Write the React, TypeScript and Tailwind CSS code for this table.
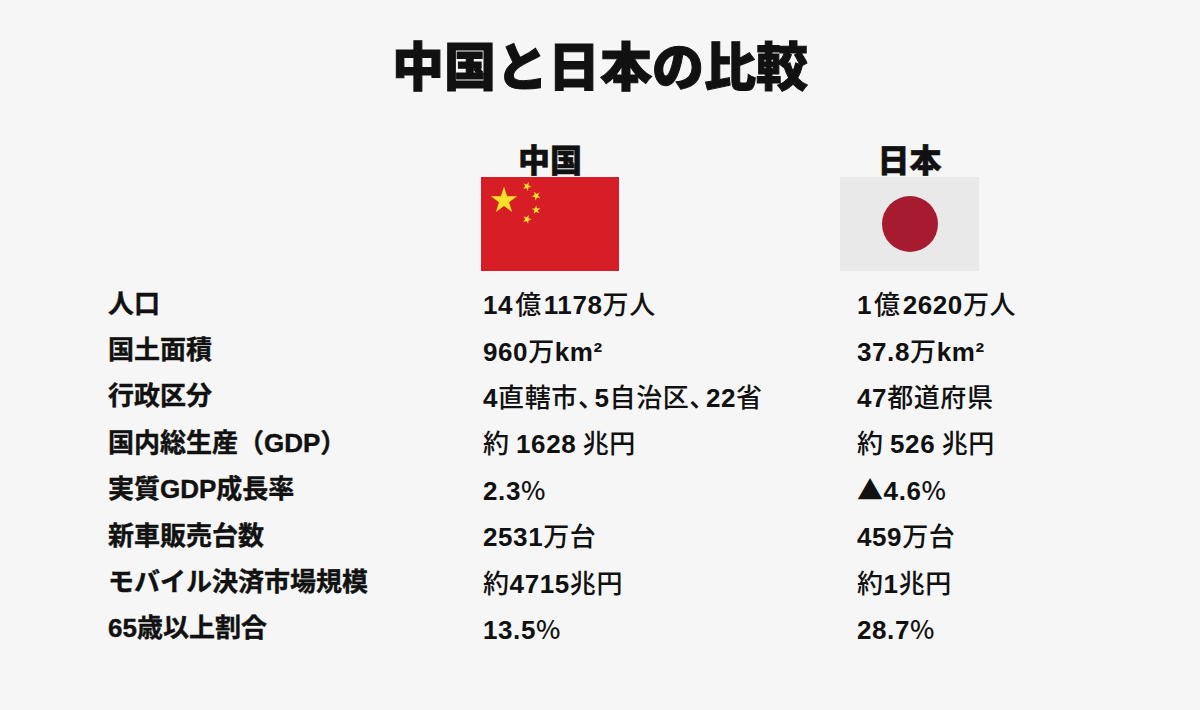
import React from 'react';

// Comparison table: China vs Japan

const rows: { label: string; cn: string; jp: string }[] = [
  { label: '人口', cn: '14億1178万人', jp: '1億2620万人' },
  { label: '国土面積', cn: '960万km²', jp: '37.8万km²' },
  { label: '行政区分', cn: '4直轄市、5自治区、22省', jp: '47都道府県' },
  { label: '国内総生産（GDP）', cn: '約 1628 兆円', jp: '約 526 兆円' },
  { label: '実質GDP成長率', cn: '2.3%', jp: '▲4.6%' },
  { label: '新車販売台数', cn: '2531万台', jp: '459万台' },
  { label: 'モバイル決済市場規模', cn: '約4715兆円', jp: '約1兆円' },
  { label: '65歳以上割合', cn: '13.5%', jp: '28.7%' },
];

// Numbers/latin are set heavier than the Japanese characters in values
function Value({ text }: { text: string }) {
  const parts = text.split(/([0-9A-Za-z.²]+|、|億)/).filter((p) => p !== '');
  return (
    <span className="tracking-[0.6px]">
      {parts.map((p, i) => {
        if (/^[0-9A-Za-z.²]+$/.test(p)) {
          return (
            <span key={i} className="font-['Liberation_Sans',sans-serif] font-bold">
              {p}
            </span>
          );
        }
        if (p === '、') {
          // half-width punctuation, as in the proportional setting
          return (
            <span key={i} className="mr-[3px] [font-feature-settings:'halt'] font-['Noto_Sans_CJK_JP',sans-serif] font-medium">
              {p}
            </span>
          );
        }
        if (p === '億') {
          return (
            <span key={i} className="mx-[2px] font-['Noto_Sans_CJK_JP',sans-serif] font-medium">
              {p}
            </span>
          );
        }
        return (
          <span key={i} className="font-['Noto_Sans_CJK_JP',sans-serif] font-medium whitespace-pre">
            {p}
          </span>
        );
      })}
    </span>
  );
}

function starPoints(cx: number, cy: number, r: number, rot: number) {
  const pts: string[] = [];
  for (let i = 0; i < 10; i++) {
    const rad = i % 2 === 0 ? r : r * 0.382;
    const a = rot + (i * Math.PI) / 5;
    pts.push(`${(cx + rad * Math.sin(a)).toFixed(3)},${(cy - rad * Math.cos(a)).toFixed(3)}`);
  }
  return pts.join(' ');
}

function ChinaFlag() {
  const small = [
    [10, 2],
    [12, 4],
    [12, 7],
    [10, 9],
  ];
  return (
    <svg viewBox="0 0 30 20" preserveAspectRatio="none" className="w-[138px] h-[94px] block">
      <rect width="30" height="20" fill="#d71e27" />
      <polygon points={starPoints(5, 5, 3, 0)} fill="#f5e12a" />
      {small.map(([x, y], i) => {
        const rot = Math.atan2(5 - x, -(5 - y));
        return <polygon key={i} points={starPoints(x, y, 1, rot)} fill="#f5e12a" />;
      })}
    </svg>
  );
}

function JapanFlag() {
  return (
    <div className="w-[139px] h-[94px] bg-[#e9e9e9] flex items-center justify-center">
      <div className="w-[56px] h-[56px] rounded-full bg-[#a61c2e]" />
    </div>
  );
}

export default function App() {
  return (
    <div className="w-[1200px] h-[710px] bg-[#f6f6f6] text-[#111] overflow-hidden font-['Liberation_Sans','Noto_Sans_CJK_JP',sans-serif]">
      <h1 className="pt-[38px] h-[90px] text-center text-[52px] leading-none font-black font-['Noto_Sans_CJK_JP',sans-serif] [-webkit-text-stroke:1px_#111]">
        中国と日本の比較
      </h1>

      {/* country headers with flags */}
      <div className="mt-[52px] flex pl-[481px]">
        <div className="w-[138px] flex flex-col items-center">
          <div className="text-[32px] leading-none font-black font-['Noto_Sans_CJK_JP',sans-serif] [-webkit-text-stroke:0.5px_#111]">中国</div>
          <div className="mt-[3px]">
            <ChinaFlag />
          </div>
        </div>
        <div className="ml-[221px] w-[139px] flex flex-col items-center">
          <div className="text-[32px] leading-none font-black font-['Noto_Sans_CJK_JP',sans-serif] [-webkit-text-stroke:0.5px_#111]">日本</div>
          <div className="mt-[3px]">
            <JapanFlag />
          </div>
        </div>
      </div>

      {/* rows */}
      <div className="mt-[10px] pl-[108px]">
        {rows.map((r) => (
          <div key={r.label} className="flex items-center h-[46.4px]">
            <div className="w-[375px] text-[26px] font-bold [-webkit-text-stroke:0.4px_#111]">{r.label}</div>
            <div className="w-[374px] text-[26px]">
              <Value text={r.cn} />
            </div>
            <div className="text-[26px]">
              <Value text={r.jp} />
            </div>
          </div>
        ))}
      </div>
    </div>
  );
}
